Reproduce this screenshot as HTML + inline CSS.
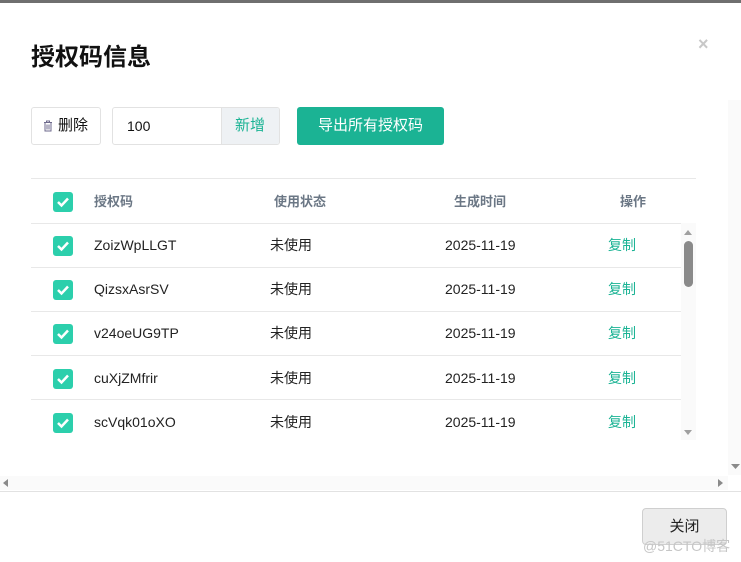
<!DOCTYPE html>
<html><head><meta charset="utf-8"><style>
*{margin:0;padding:0;box-sizing:border-box}
body{width:741px;height:562px;overflow:hidden;background:#fff;position:relative;font-family:"Liberation Sans","Noto Sans CJK SC",sans-serif;font-size:14px;color:#222}
.a{position:absolute}
.cb{position:absolute;left:53px;width:20px;height:20px;background:#2ccfac;border-radius:3px}
.cb svg{position:absolute;left:3px;top:4px}
.t{position:absolute;font-size:14px;line-height:16px}
.h{color:#6b7785;font-weight:bold;font-size:13px}
.ln{position:absolute;left:31px;width:650px;height:1px;background:#e8e8e8}
.cp{color:#1bb394}
</style></head><body>
<div class="a" style="left:0;top:0;width:741px;height:3px;background:#6f6f6f"></div>
<div class="a" style="left:31px;top:37px;font-size:24px;font-weight:bold;color:#111">授权码信息</div>
<div class="a" style="left:698px;top:34px;font-size:18px;color:#c8c8c8;font-weight:bold">×</div>

<div class="a" style="left:31px;top:107px;width:70px;height:38px;border:1px solid #e2e2e2;border-radius:3px"></div>
<svg class="a" style="left:43px;top:120px" width="10" height="12" viewBox="0 0 10 12"><path d="M1 2.5h8M3.5 2.5V1h3v1.5M2 3v8h6V3M4 4.5v5M6 4.5v5" stroke="#6e6a8c" fill="none" stroke-width="1"/></svg>
<div class="t" style="left:58px;top:118px;color:#111;font-size:15px">删除</div>
<div class="a" style="left:112px;top:107px;width:168px;height:38px;border:1px solid #e2e2e2;border-radius:3px;overflow:hidden"><div class="a" style="left:108px;top:0;width:60px;height:38px;background:#eef1f4;border-left:1px solid #e2e2e2"></div></div>
<div class="t" style="left:127px;top:118px;color:#111">100</div>
<div class="t" style="left:235px;top:118px;color:#1bb394;font-size:15px">新增</div>
<div class="a" style="left:297px;top:107px;width:147px;height:38px;background:#1bb394;border-radius:3px;color:#fff;font-size:15px;line-height:38px;text-align:center">导出所有授权码</div>

<div class="a" style="left:31px;top:178px;width:665px;height:1px;background:#e8e8e8"></div>
<div class="cb" style="top:192px"><svg width="14" height="12"><path d="M2 6l3.5 3.5L12 2.5" stroke="#fff" stroke-width="2.5" fill="none"/></svg></div>
<div class="t h" style="left:94px;top:194px">授权码</div>
<div class="t h" style="left:274px;top:194px">使用状态</div>
<div class="t h" style="left:454px;top:194px">生成时间</div>
<div class="t h" style="left:620px;top:194px">操作</div>
<div class="ln" style="top:223px;width:665px"></div>
<div class="ln" style="top:267px"></div>
<div class="ln" style="top:311px"></div>
<div class="ln" style="top:355px"></div>
<div class="ln" style="top:399px"></div>

<div class="cb" style="top:236px"><svg width="14" height="12"><path d="M2 6l3.5 3.5L12 2.5" stroke="#fff" stroke-width="2.5" fill="none"/></svg></div>
<div class="t" style="left:94px;top:237px">ZoizWpLLGT</div><div class="t" style="left:270px;top:237px">未使用</div><div class="t" style="left:445px;top:237px">2025-11-19</div><div class="t cp" style="left:608px;top:237px">复制</div>
<div class="cb" style="top:280px"><svg width="14" height="12"><path d="M2 6l3.5 3.5L12 2.5" stroke="#fff" stroke-width="2.5" fill="none"/></svg></div>
<div class="t" style="left:94px;top:281px">QizsxAsrSV</div><div class="t" style="left:270px;top:281px">未使用</div><div class="t" style="left:445px;top:281px">2025-11-19</div><div class="t cp" style="left:608px;top:281px">复制</div>
<div class="cb" style="top:324px"><svg width="14" height="12"><path d="M2 6l3.5 3.5L12 2.5" stroke="#fff" stroke-width="2.5" fill="none"/></svg></div>
<div class="t" style="left:94px;top:325px">v24oeUG9TP</div><div class="t" style="left:270px;top:325px">未使用</div><div class="t" style="left:445px;top:325px">2025-11-19</div><div class="t cp" style="left:608px;top:325px">复制</div>
<div class="cb" style="top:369px"><svg width="14" height="12"><path d="M2 6l3.5 3.5L12 2.5" stroke="#fff" stroke-width="2.5" fill="none"/></svg></div>
<div class="t" style="left:94px;top:370px">cuXjZMfrir</div><div class="t" style="left:270px;top:370px">未使用</div><div class="t" style="left:445px;top:370px">2025-11-19</div><div class="t cp" style="left:608px;top:370px">复制</div>
<div class="cb" style="top:413px"><svg width="14" height="12"><path d="M2 6l3.5 3.5L12 2.5" stroke="#fff" stroke-width="2.5" fill="none"/></svg></div>
<div class="t" style="left:94px;top:414px">scVqk01oXO</div><div class="t" style="left:270px;top:414px">未使用</div><div class="t" style="left:445px;top:414px">2025-11-19</div><div class="t cp" style="left:608px;top:414px">复制</div>

<div class="a" style="left:681px;top:223px;width:15px;height:217px;background:#fafafa"></div>
<svg class="a" style="left:684px;top:230px" width="9" height="6"><path d="M0 5h8L4 0z" fill="#a0a0a0"/></svg>
<div class="a" style="left:684px;top:241px;width:9px;height:46px;background:#8a8a8a;border-radius:5px"></div>
<svg class="a" style="left:684px;top:430px" width="9" height="6"><path d="M0 0h8L4 5z" fill="#a0a0a0"/></svg>

<div class="a" style="left:728px;top:100px;width:13px;height:375px;background:#fafafa"></div>
<svg class="a" style="left:731px;top:464px" width="9" height="6"><path d="M0 0h9L4.5 5z" fill="#8a8a8a"/></svg>
<div class="a" style="left:0;top:476px;width:728px;height:14px;background:#fafafa"></div>
<svg class="a" style="left:3px;top:479px" width="6" height="9"><path d="M5 0v8L0 4z" fill="#8a8a8a"/></svg>
<svg class="a" style="left:718px;top:479px" width="6" height="9"><path d="M0 0v8L5 4z" fill="#8a8a8a"/></svg>
<div class="a" style="left:0;top:491px;width:741px;height:1px;background:#e2e2e2"></div>

<div class="a" style="left:642px;top:508px;width:85px;height:37px;background:#ececec;border:1px solid #cfcfcf;border-radius:4px;text-align:center;line-height:35px;font-size:15px;color:#222">关闭</div>
<div class="a" style="left:643px;top:536px;font-size:14px;color:#c6c6c6">@51CTO博客</div>
</body></html>
